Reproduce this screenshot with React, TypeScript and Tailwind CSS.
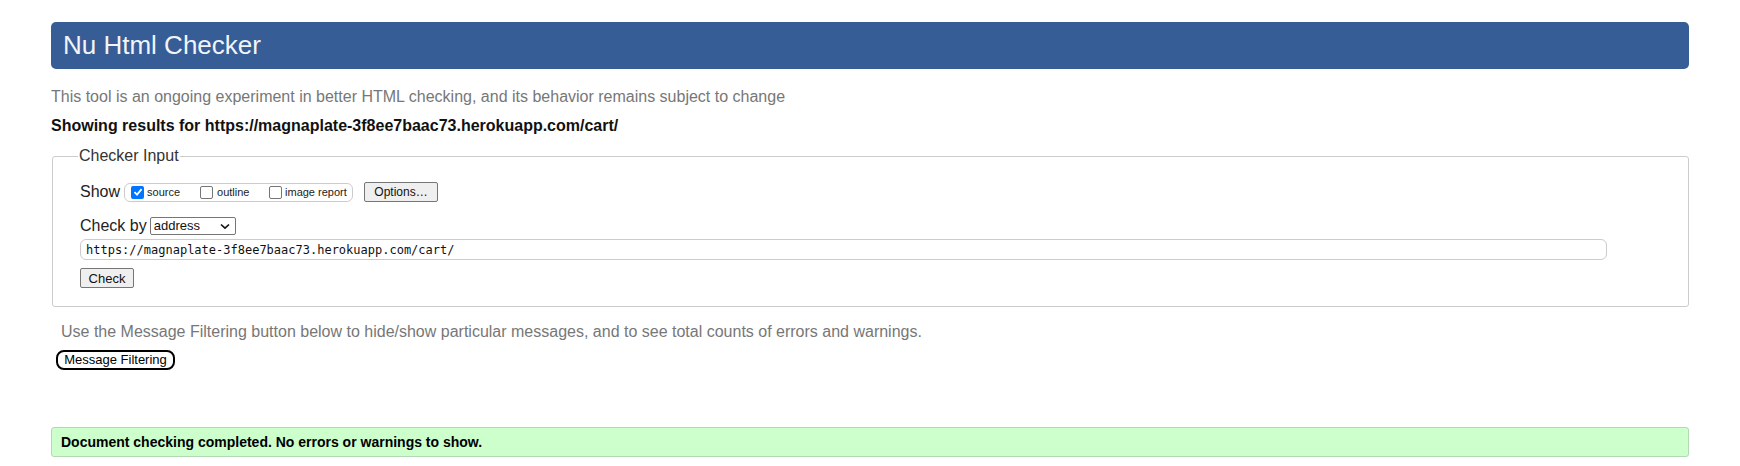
const sans = { fontFamily: '"Liberation Sans", Arial, sans-serif' }

function Box({ checked }: { checked?: boolean }) {
  if (checked) {
    return (
      <span className="inline-flex h-[13px] w-[13px] shrink-0 items-center justify-center rounded-[2px] bg-[#0075ff]">
        <svg width="10" height="10" viewBox="0 0 10 10">
          <path d="M1.5 5.2 L4 7.6 L8.6 2.2" fill="none" stroke="#fff" strokeWidth="1.8" />
        </svg>
      </span>
    )
  }
  return <span className="inline-block h-[13px] w-[13px] shrink-0 rounded-[2px] border border-[#767676] bg-white" />
}

export default function App() {
  return (
    <div className="min-h-[466px] bg-white px-[51px] pt-[22px] text-[16px]" style={sans}>
      <header className="flex h-[47px] items-center rounded-[5px] bg-[#365d95] pl-[12px]">
        <h1 className="text-[26px] text-[#f2f4f8]">Nu Html Checker</h1>
      </header>

      <p className="mt-[18px] leading-[20px] text-[#777]">
        This tool is an ongoing experiment in better HTML checking, and its behavior remains subject to change
      </p>
      <p className="mt-[10px] text-[16px] font-bold leading-[18px] text-[#111]">
        Showing results for https://magnaplate-3f8ee7baac73.herokuapp.com/cart/
      </p>

      <fieldset className="mt-[12px] ml-[1px] h-[160px] rounded-[3px] border border-[#ccc] pl-[27px]">
        <legend className="-ml-[2px] px-[1px] text-[16px] leading-[18px] text-[#333]">Checker Input</legend>

        <div className="mt-[15px] flex items-center">
          <span className="mr-[4px] text-[16px] text-[#222]">Show</span>
          <div className="flex h-[19px] w-[229px] items-center rounded-[6px] border border-[#ccc] pl-[6px] text-[11px] text-[#222]">
            <Box checked />
            <span className="ml-[3px] w-[53px]">source</span>
            <Box />
            <span className="ml-[4px] w-[52px]">outline</span>
            <Box />
            <span className="ml-[3px]">image report</span>
          </div>
          <button className="ml-[11px] h-[20px] w-[74px] rounded-[2px] border border-[#767676] bg-[#efefef] text-[12px] text-[#111]">
            Options…
          </button>
        </div>

        <div className="mt-[10px] flex items-center">
          <span className="mr-[3px] text-[16px] text-[#222]">Check by</span>
          <div className="flex h-[18px] w-[86px] items-center justify-between rounded-[2px] border border-[#767676] bg-white pr-[5px] pl-[3px] text-[13px] text-[#111]">
            <span>address</span>
            <svg width="10" height="7" viewBox="0 0 10 7">
              <path d="M1 1.5 L5 5.2 L9 1.5" fill="none" stroke="#111" strokeWidth="1.6" />
            </svg>
          </div>
        </div>

        <div
          className="mt-[1px] flex h-[21px] w-[1527px] items-center rounded-[6px] border border-[#ccc] pl-[5px] text-[12px] text-[#111]"
          style={{ fontFamily: '"DejaVu Sans Mono", monospace' }}
        >
          https://magnaplate-3f8ee7baac73.herokuapp.com/cart/
        </div>

        <button className="mt-[8px] h-[20px] w-[54px] rounded-[2px] border border-[#767676] bg-[#efefef] text-[13px] text-[#111]">
          Check
        </button>
      </fieldset>

      <p className="mt-[15px] ml-[10px] leading-[20px] text-[#777]">
        Use the Message Filtering button below to hide/show particular messages, and to see total counts of errors and warnings.
      </p>
      <button className="mt-[8px] ml-[5px] flex h-[20px] w-[119px] items-center justify-center rounded-[8px] border-2 border-black bg-white text-[13px] text-black">
        Message Filtering
      </button>

      <div className="mt-[57px] flex h-[30px] items-center rounded-[3px] border border-[#b4d8b4] bg-[#ccffcc] pl-[9px] text-[14px] font-bold text-black">
        Document checking completed. No errors or warnings to show.
      </div>
    </div>
  )
}
